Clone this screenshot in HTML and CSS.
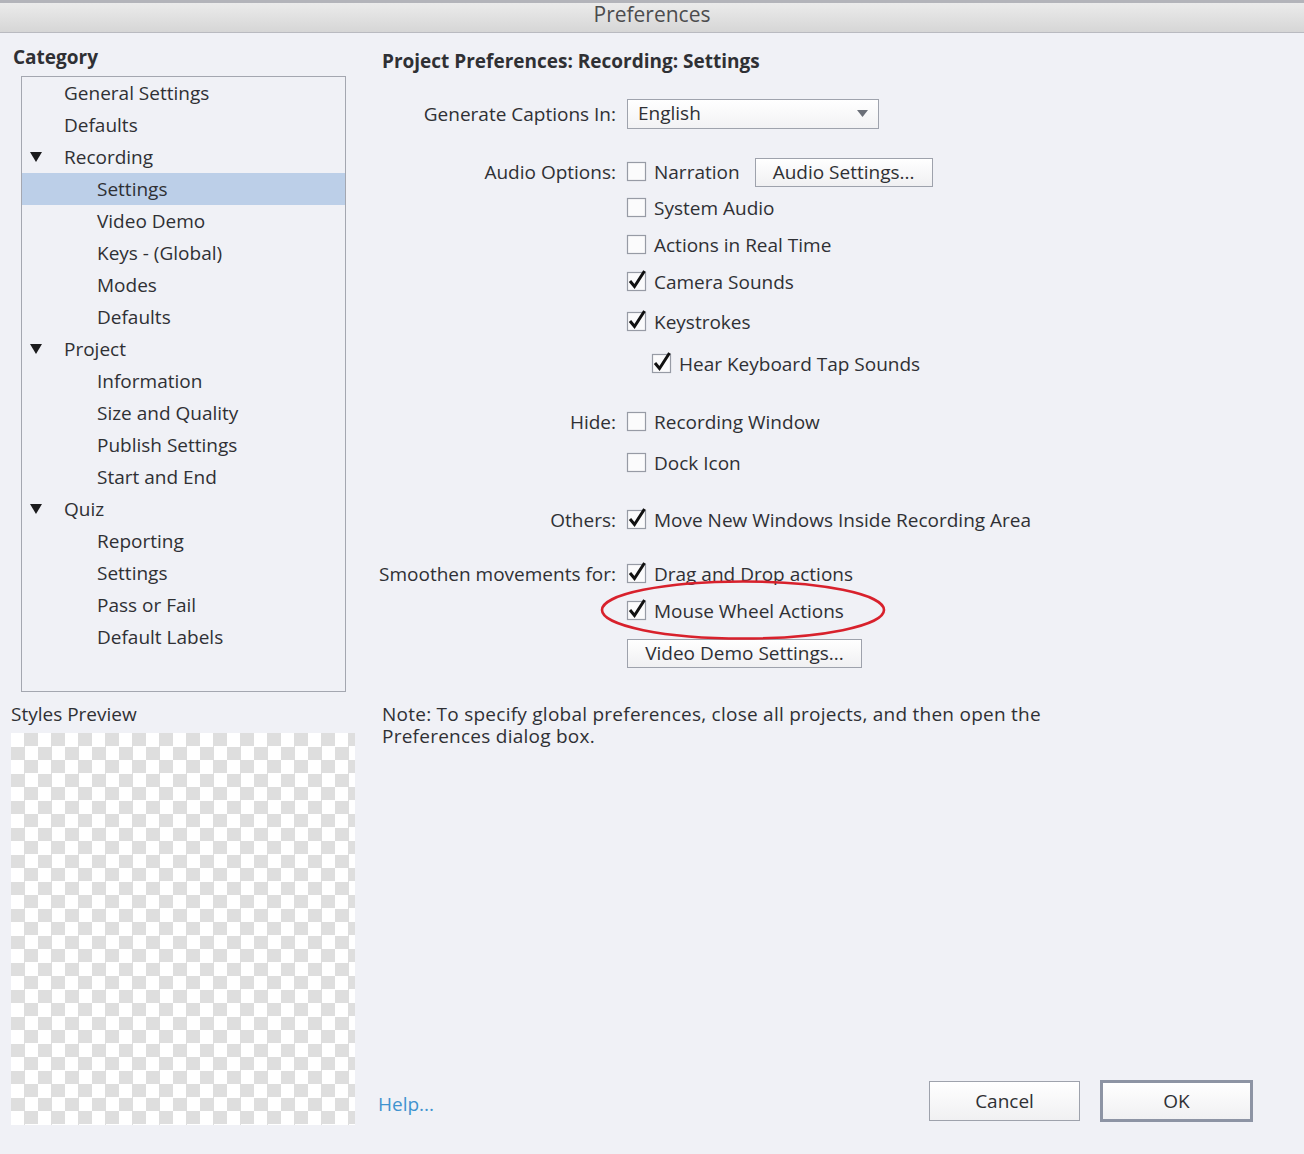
FILE: index.html
```html
<!DOCTYPE html>
<html>
<head>
<meta charset="utf-8">
<title>Preferences</title>
<link rel="stylesheet" href="styles.css">
</head>
<body>
<div class="titlebar">Preferences</div>
<div class="main">
  <div class="left">
    <div class="cat-label">Category</div>
    <div class="tree">
      <div class="row l1">General Settings</div>
      <div class="row l1">Defaults</div>
      <div class="row l1"><span class="tri"></span>Recording</div>
      <div class="row l2 sel">Settings</div>
      <div class="row l2">Video Demo</div>
      <div class="row l2">Keys - (Global)</div>
      <div class="row l2">Modes</div>
      <div class="row l2">Defaults</div>
      <div class="row l1"><span class="tri"></span>Project</div>
      <div class="row l2">Information</div>
      <div class="row l2">Size and Quality</div>
      <div class="row l2">Publish Settings</div>
      <div class="row l2">Start and End</div>
      <div class="row l1"><span class="tri"></span>Quiz</div>
      <div class="row l2">Reporting</div>
      <div class="row l2">Settings</div>
      <div class="row l2">Pass or Fail</div>
      <div class="row l2">Default Labels</div>
    </div>
    <div class="preview-label">Styles Preview</div>
    <div class="checker"></div>
  </div>
  <div class="right">
    <div class="page-title">Project Preferences: Recording: Settings</div>
    <div class="form">
      <div class="frow">
        <div class="flabel">Generate Captions In:</div>
        <div class="fctl">
          <div class="select"><span>English</span>
            <svg class="arrow" width="11" height="8" viewBox="0 0 11 8"><path d="M0 0 L11 0 L5.5 7 Z" fill="#6b6f78"/></svg>
          </div>
        </div>
      </div>
      <div class="frow g28">
        <div class="flabel">Audio Options:</div>
        <div class="fctl">
          <span class="cb"><svg width="20" height="20" viewBox="0 0 20 20"><rect x="0.5" y="0.5" width="18" height="18" class="box"/></svg></span>
          <span class="cbl">Narration</span>
          <span class="btn audio">Audio Settings...</span>
        </div>
      </div>
      <div class="frow g6">
        <div class="flabel"></div>
        <div class="fctl">
          <span class="cb"><svg width="20" height="20" viewBox="0 0 20 20"><rect x="0.5" y="0.5" width="18" height="18" class="box"/></svg></span>
          <span class="cbl">System Audio</span>
        </div>
      </div>
      <div class="frow g7">
        <div class="flabel"></div>
        <div class="fctl">
          <span class="cb"><svg width="20" height="20" viewBox="0 0 20 20"><rect x="0.5" y="0.5" width="18" height="18" class="box"/></svg></span>
          <span class="cbl">Actions in Real Time</span>
        </div>
      </div>
      <div class="frow g7">
        <div class="flabel"></div>
        <div class="fctl">
          <span class="cb"><svg width="20" height="20" viewBox="0 0 20 20"><rect x="0.5" y="0.5" width="18" height="18" class="box"/><path d="M3 9 L7.5 14.5 L17.5 -1" class="tick"/></svg></span>
          <span class="cbl">Camera Sounds</span>
        </div>
      </div>
      <div class="frow g10">
        <div class="flabel"></div>
        <div class="fctl">
          <span class="cb"><svg width="20" height="20" viewBox="0 0 20 20"><rect x="0.5" y="0.5" width="18" height="18" class="box"/><path d="M3 9 L7.5 14.5 L17.5 -1" class="tick"/></svg></span>
          <span class="cbl">Keystrokes</span>
        </div>
      </div>
      <div class="frow g12">
        <div class="flabel"></div>
        <div class="fctl indent">
          <span class="cb"><svg width="20" height="20" viewBox="0 0 20 20"><rect x="0.5" y="0.5" width="18" height="18" class="box"/><path d="M3 9 L7.5 14.5 L17.5 -1" class="tick"/></svg></span>
          <span class="cbl">Hear Keyboard Tap Sounds</span>
        </div>
      </div>
      <div class="frow g28">
        <div class="flabel">Hide:</div>
        <div class="fctl">
          <span class="cb"><svg width="20" height="20" viewBox="0 0 20 20"><rect x="0.5" y="0.5" width="18" height="18" class="box"/></svg></span>
          <span class="cbl">Recording Window</span>
        </div>
      </div>
      <div class="frow g11">
        <div class="flabel"></div>
        <div class="fctl">
          <span class="cb"><svg width="20" height="20" viewBox="0 0 20 20"><rect x="0.5" y="0.5" width="18" height="18" class="box"/></svg></span>
          <span class="cbl">Dock Icon</span>
        </div>
      </div>
      <div class="frow g27">
        <div class="flabel">Others:</div>
        <div class="fctl">
          <span class="cb"><svg width="20" height="20" viewBox="0 0 20 20"><rect x="0.5" y="0.5" width="18" height="18" class="box"/><path d="M3 9 L7.5 14.5 L17.5 -1" class="tick"/></svg></span>
          <span class="cbl">Move New Windows Inside Recording Area</span>
        </div>
      </div>
      <div class="frow g24">
        <div class="flabel">Smoothen movements for:</div>
        <div class="fctl">
          <span class="cb"><svg width="20" height="20" viewBox="0 0 20 20"><rect x="0.5" y="0.5" width="18" height="18" class="box"/><path d="M3 9 L7.5 14.5 L17.5 -1" class="tick"/></svg></span>
          <span class="cbl">Drag and Drop actions</span>
        </div>
      </div>
      <div class="frow g7">
        <div class="flabel"></div>
        <div class="fctl marked">
          <span class="cb"><svg width="20" height="20" viewBox="0 0 20 20"><rect x="0.5" y="0.5" width="18" height="18" class="box"/><path d="M3 9 L7.5 14.5 L17.5 -1" class="tick"/></svg></span>
          <span class="cbl">Mouse Wheel Actions</span>
          <svg class="ellipse" width="290" height="64" viewBox="0 0 290 64"><ellipse cx="143" cy="31" rx="141" ry="28.5" fill="none" stroke="#d8212c" stroke-width="2.6"/></svg>
        </div>
      </div>
      <div class="frow g12">
        <div class="flabel"></div>
        <div class="fctl">
          <span class="btn vdemo">Video Demo Settings...</span>
        </div>
      </div>
    </div>
    <div class="note">
      <div class="nline">Note: To specify global preferences, close all projects, and then open the</div>
      <div class="nline">Preferences dialog box.</div>
    </div>
    <div class="footer">
      <span class="help">Help...</span>
      <span class="btn cancel">Cancel</span>
      <span class="btn ok">OK</span>
    </div>
  </div>
</div>
</body>
</html>
```
FILE: styles.css
```css
html, body {
  margin: 0;
  padding: 0;
}
body {
  width: 1304px;
  height: 1154px;
  overflow: hidden;
  background: #f0f1f6;
  font-family: "Open Sans", "Noto Sans", sans-serif;
  font-size: 19px;
  color: #2f3034;
}
.titlebar {
  height: 29px;
  border-top: 3px solid #b3b4ba;
  border-bottom: 1px solid #b9bac0;
  background: linear-gradient(#ebebeb, #d6d6d6);
  text-align: center;
  font-size: 21px;
  line-height: 23px;
  color: #4c4c4e;
}
.main {
  display: flex;
  height: 1121px;
}
.left {
  width: 359px;
  padding-left: 11px;
  flex: none;
}
.cat-label {
  margin-top: 12px;
  margin-left: 2px;
  line-height: 24px;
  font-weight: 700;
}
.tree {
  margin-top: 7px;
  margin-left: 10px;
  width: 323px;
  height: 614px;
  border: 1px solid #a4a7b0;
}
.row {
  height: 32px;
  line-height: 32px;
  white-space: nowrap;
  display: flex;
  align-items: center;
}
.row.l1 { padding-left: 42px; }
.row.l2 { padding-left: 75px; }
.row.sel { background: #bccfe8; }
.tri {
  width: 0;
  height: 0;
  border-left: 6px solid transparent;
  border-right: 6px solid transparent;
  border-top: 10px solid #1b1b1d;
  margin-left: -34px;
  margin-right: 22px;
}
.preview-label {
  margin-top: 10px;
  line-height: 24px;
}
.checker {
  margin-top: 7px;
  width: 344px;
  height: 392px;
  background-color: #fff;
  background-image: conic-gradient(#dedede 25%, #ffffff 0 50%, #dedede 0 75%, #ffffff 0);
  background-size: 27px 27px;
}
.right {
  flex: 1;
  display: flex;
  flex-direction: column;
  padding-bottom: 32px;
}
.page-title {
  margin-top: 16px;
  margin-left: 12px;
  line-height: 24px;
  font-weight: 700;
}
.form {
  margin-top: 26px;
}
.frow {
  display: flex;
  height: 30px;
  align-items: center;
}
.g6 { margin-top: 6px; }
.g7 { margin-top: 7px; }
.g10 { margin-top: 10px; }
.g11 { margin-top: 11px; }
.g12 { margin-top: 12px; }
.g24 { margin-top: 24px; }
.g27 { margin-top: 27px; }
.g28 { margin-top: 28px; }
.flabel {
  width: 246px;
  text-align: right;
  white-space: nowrap;
  flex: none;
}
.fctl {
  margin-left: 11px;
  display: flex;
  align-items: center;
  white-space: nowrap;
  height: 30px;
}
.fctl.indent { margin-left: 36px; }
.fctl.marked { position: relative; }
.ellipse {
  position: absolute;
  left: -27px;
  top: -17px;
  overflow: visible;
}
.cb {
  display: inline-flex;
  width: 20px;
  height: 20px;
}
.cb svg { overflow: visible; }
.box {
  fill: #fbfbfc;
  stroke: #979ba5;
  stroke-width: 1.2;
}
.tick {
  fill: none;
  stroke: #111;
  stroke-width: 3;
  stroke-linejoin: miter;
}
.cbl {
  margin-left: 7px;
}
.select {
  border: 1px solid #9fa3ad;
  background: linear-gradient(#ffffff, #f2f2f4);
  display: flex;
  align-items: center;
  justify-content: space-between;
  padding: 0 10px 0 10px;
  box-sizing: border-box;
  width: 252px;
  height: 30px;
}
.select span { line-height: 26px; margin-top: -2px; }
.btn {
  display: inline-flex;
  align-items: center;
  justify-content: center;
  box-sizing: border-box;
  border: 1px solid #9ea2ac;
  background: linear-gradient(#ffffff, #f0f0f2);
  white-space: nowrap;
}
.btn.audio {
  margin-left: 15px;
  width: 178px;
  height: 29px;
}
.btn.vdemo {
  width: 235px;
  height: 29px;
}
.note {
  margin-top: 35px;
  margin-left: 12px;
  letter-spacing: 0.25px;
}
.nline {
  height: 22px;
  line-height: 22px;
  white-space: nowrap;
}
.footer {
  margin-top: auto;
  display: flex;
  align-items: center;
  padding-right: 51px;
}
.help {
  margin-left: 8px;
  margin-top: 5px;
  color: #3f93cf;
  margin-right: auto;
}
.btn.cancel {
  width: 151px;
  height: 40px;
  margin-right: 20px;
}
.btn.ok {
  width: 153px;
  height: 42px;
  border: 3px solid #8d94a4;
}
```
